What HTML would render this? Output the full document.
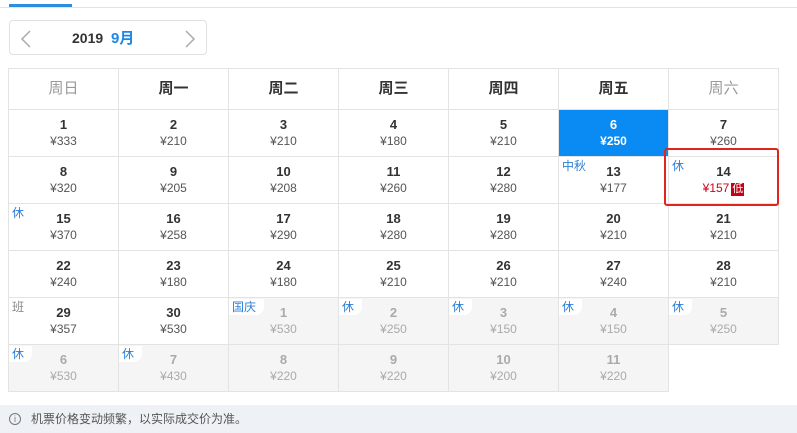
<!DOCTYPE html>
<html><head><meta charset="utf-8"><style>
*{margin:0;padding:0;box-sizing:border-box}
body{width:797px;height:433px;background:#fff;font-family:"Liberation Sans","Noto Sans CJK SC",sans-serif;position:relative;overflow:hidden;color:#333}
.tabline{position:absolute;left:0;top:7px;width:797px;height:1px;background:#e3e3e3}
.tabact{position:absolute;left:9px;top:4px;width:63px;height:3px;background:#2d8ee0}
.nav{position:absolute;left:9px;top:20px;width:198px;height:35px;border:1px solid #e0e0e0;border-radius:4px}
.nav .y{position:absolute;left:62px;top:9px;font-size:14px;font-weight:bold;color:#333}
.nav .m{position:absolute;left:101px;top:6px;font-size:15px;font-weight:bold;color:#1e88e5}
.nav svg{position:absolute;top:9px}
.grid{position:absolute;left:8px;top:68px;width:771px;height:324px;border-left:1px solid #e3e3e3;border-top:1px solid #e3e3e3}
.c{position:absolute;width:110px;border-right:1px solid #e3e3e3;border-bottom:1px solid #e3e3e3;text-align:center}
.h{height:41px;line-height:40px;font-size:15px;font-weight:bold;color:#333}
.h.g{color:#999;font-weight:normal}
.d{height:47px;padding-top:7px}
.d b{display:block;font-size:13px;line-height:16px;color:#333}
.d span{display:block;font-size:12px;line-height:16px;color:#555}
.d.n{background:#f5f5f5}
.d.n b,.d.n span{color:#aaa}
.d.sel{background:#0a8af3}
.d.sel b,.d.sel span{color:#fff;font-weight:bold}
.t{position:absolute;left:0;top:1px;font-size:12px;line-height:16px;color:#2d7fd6;background:#fff;padding:0 8px 0 3px;border-radius:0 0 8px 0}
.t.gr{color:#888}
.red{color:#d0021b!important}
.low{display:inline-block;background:#c40018;color:#fff;font-size:11px;line-height:13px;padding:0 1px;margin-left:2px;font-style:normal}
.box{position:absolute;left:664px;top:148px;width:115px;height:58px;border:2px solid #e0251b;border-radius:3px}
.foot{position:absolute;left:0;top:405px;width:797px;height:28px;background:#eef1f6;font-size:12px;color:#555;line-height:28px;padding-left:31px}
.foot i{position:absolute;left:9px;top:8px;width:12px;height:12px;border:1px solid #777;border-radius:50%;font-style:normal;font-size:9px;line-height:10px;text-align:center;color:#777}
</style></head><body>
<div class="tabline"></div><div class="tabact"></div>
<div class="nav">
<svg style="left:10px" width="12" height="18" viewBox="0 0 12 18"><path d="M10 1L2 9l8 8" fill="none" stroke="#aaa" stroke-width="1.5"/></svg>
<span class="y">2019</span><span class="m">9月</span>
<svg style="left:174px" width="12" height="18" viewBox="0 0 12 18"><path d="M2 1l8 8-8 8" fill="none" stroke="#aaa" stroke-width="1.5"/></svg>
</div>
<div class="grid" id="g"></div>
<div class="box"></div>
<div class="foot"><i>i</i>机票价格变动频繁，以实际成交价为准。</div>
<script>
var g=document.getElementById('g'),H=['周日','周一','周二','周三','周四','周五','周六'],s='';
H.forEach(function(h,i){s+='<div class="c h'+(i==0||i==6?' g':'')+'" style="left:'+(i*110)+'px;top:0">'+h+'</div>'});
var D=[[1,333],[2,210],[3,210],[4,180],[5,210],[6,250,'sel'],[7,260],
[8,320],[9,205],[10,208],[11,260],[12,280],[13,177,'','中秋'],[14,157,'low','休'],
[15,370,'','休'],[16,258],[17,290],[18,280],[19,280],[20,210],[21,210],
[22,240],[23,180],[24,180],[25,210],[26,210],[27,240],[28,210],
[29,357,'','班'],[30,530],[1,530,'n','国庆'],[2,250,'n','休'],[3,150,'n','休'],[4,150,'n','休'],[5,250,'n','休'],
[6,530,'n','休'],[7,430,'n','休'],[8,220,'n'],[9,220,'n'],[10,200,'n'],[11,220,'n']];
D.forEach(function(d,k){var r=Math.floor(k/7),c=k%7,cl=d[2]||'';
var p=cl=='low'?'<span class="red">¥'+d[1]+'<i class="low">低</i></span>':'<span>¥'+d[1]+'</span>';
s+='<div class="c d '+(cl=='low'?'':cl)+'" style="left:'+(c*110)+'px;top:'+(41+r*47)+'px">'+(d[3]?'<div class="t'+(d[3]=='班'?' gr':'')+'">'+d[3]+'</div>':'')+'<b>'+d[0]+'</b>'+p+'</div>'});
g.innerHTML=s;
</script>
</body></html>
